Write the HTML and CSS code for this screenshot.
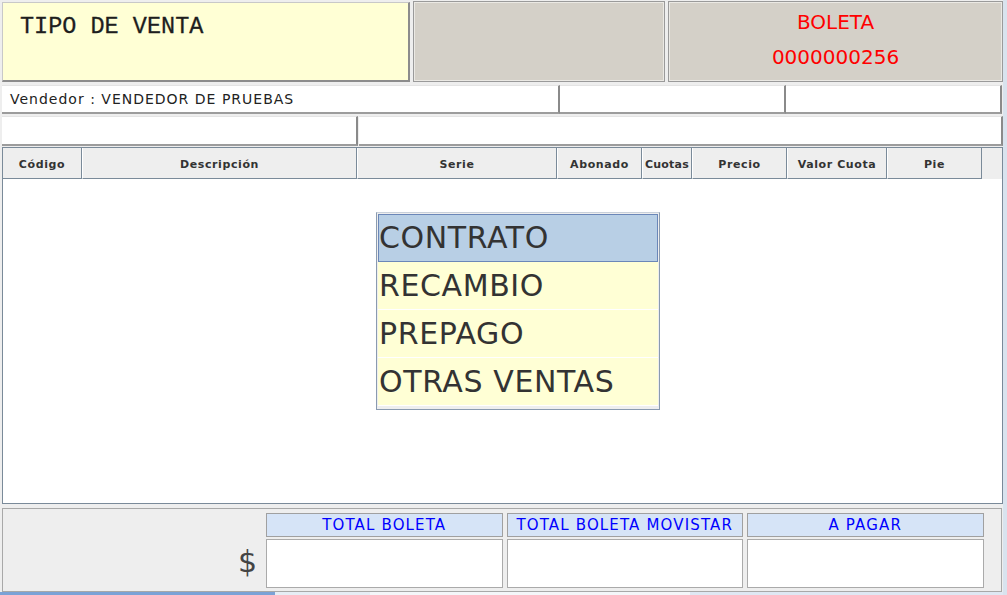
FILE: index.html
```html
<!DOCTYPE html>
<html lang="es">
<head>
<meta charset="utf-8">
<title>Tipo de venta</title>
<link rel="stylesheet" href="styles.css">
</head>
<body>
<div class="screen">
  <div class="top-row">
    <div class="title-box">TIPO DE VENTA</div>
    <div class="gray-box"></div>
    <div class="gray-box doc-box">
      <div class="doc-type">BOLETA</div>
      <div class="doc-num">0000000256</div>
    </div>
  </div>

  <div class="field-row row-a">
    <div class="field f-vend">Vendedor : VENDEDOR DE PRUEBAS</div>
    <div class="field f-mid"></div>
    <div class="field f-end"></div>
  </div>

  <div class="field-row row-b">
    <div class="field f-left"></div>
    <div class="field f-right"></div>
  </div>

  <div class="table">
    <div class="thead">
      <div class="th c-cod">Código</div>
      <div class="th c-desc">Descripción</div>
      <div class="th c-serie">Serie</div>
      <div class="th c-abon">Abonado</div>
      <div class="th c-cuot">Cuotas</div>
      <div class="th c-prec">Precio</div>
      <div class="th c-vcuo">Valor Cuota</div>
      <div class="th c-pie">Pie</div>
      <div class="th-fill"></div>
    </div>
    <div class="tbody"></div>

    <div class="popup">
      <div class="opt selected">CONTRATO</div>
      <div class="opt">RECAMBIO</div>
      <div class="opt">PREPAGO</div>
      <div class="opt">OTRAS VENTAS</div>
    </div>
  </div>

  <div class="totals">
    <div class="dollar">$</div>
    <div class="tot-col">
      <div class="tot-head">TOTAL BOLETA</div>
      <div class="tot-val"></div>
    </div>
    <div class="tot-col">
      <div class="tot-head">TOTAL BOLETA MOVISTAR</div>
      <div class="tot-val"></div>
    </div>
    <div class="tot-col">
      <div class="tot-head">A PAGAR</div>
      <div class="tot-val"></div>
    </div>
  </div>

  <div class="taskbar">
    <div class="tb-a"></div>
    <div class="tb-b"></div>
    <div class="tb-c"></div>
    <div class="tb-d"></div>
  </div>
</div>
</body>
</html>
```

FILE: styles.css
```css
* { box-sizing: border-box; }

html, body {
  margin: 0;
  padding: 0;
  background: #eeeeee;
}

.screen {
  position: relative;
  width: 1007px;
  height: 595px;
  overflow: hidden;
  background: #eeeeee;
  border-right: 4px solid #d9e3ee;
  font-family: "DejaVu Sans", Verdana, sans-serif;
  display: flex;
  flex-direction: column;
}

/* ---------- top row ---------- */
.top-row {
  display: flex;
  height: 82px;
  padding: 1px 0 0 2px;
  gap: 3px;
}

.title-box {
  width: 408px;
  height: 80px;
  margin-top: 1px;
  background: #ffffd5;
  border-top: 1px solid #c8c8c8;
  border-left: 1px solid #c8c8c8;
  border-right: 2px solid #8c8c8c;
  border-bottom: 2px solid #8c8c8c;
  font-family: "Liberation Mono", "Courier New", monospace;
  font-size: 23.5px;
  color: #1e1e1e;
  padding: 10px 0 0 17px;
  line-height: 28px;
  -webkit-text-stroke: 0.3px #1e1e1e;
}

.gray-box {
  width: 252px;
  height: 81px;
  background: #d4d0c8;
  border: 1px solid #9a9a9a;
  box-shadow: inset 0 0 0 1px #ebe9e4;
}

.doc-box {
  width: 335px;
  display: flex;
  flex-direction: column;
  align-items: center;
  color: #ff0000;
  font-size: 20px;
}

.doc-type { margin-top: 7px; line-height: 26px; }
.doc-num { margin-top: 9px; line-height: 26px; }

/* ---------- field rows ---------- */
.field-row {
  display: flex;
  padding-left: 2px;
}

.row-a { margin-top: 3px; height: 29px; }
.row-b { margin-top: 2px; height: 30px; }

.field {
  background: #ffffff;
  border-top: 1px solid #e4e4e4;
  border-right: 2px solid #8a8a8a;
  border-bottom: 2px solid #9c9c9c;
  height: 100%;
}

.f-vend {
  width: 558px;
  font-size: 14px;
  letter-spacing: 1px;
  color: #222;
  padding: 5px 0 0 8px;
  line-height: 17px;
  white-space: nowrap;
}
.f-mid { width: 226px; }
.f-end { width: 216px; }

.f-left { width: 356px; }
.f-right { width: 644px; margin-left: 1px; }

/* ---------- table ---------- */
.table {
  position: relative;
  margin: 1px 0 0 2px;
  width: 1001px;
  height: 357px;
  border: 1px solid #7a8a99;
  background: #ffffff;
  display: flex;
  flex-direction: column;
}

.thead {
  display: flex;
  height: 31px;
  background: #eeeeee;
}

.th {
  height: 31px;
  border-right: 1px solid #7a8a99;
  border-bottom: 1px solid #7a8a99;
  border-left: 1px solid #ffffff;
  font-size: 11px;
  font-weight: bold;
  letter-spacing: 0.6px;
  color: #333;
  display: flex;
  align-items: center;
  justify-content: center;
  padding-top: 2px;
  white-space: nowrap;
}

.c-cod { width: 79px; border-left: none; }
.c-desc { width: 275px; }
.c-serie { width: 200px; }
.c-abon { width: 85px; }
.c-cuot { width: 50px; letter-spacing: 0.2px; }
.c-prec { width: 95px; }
.c-vcuo { width: 100px; }
.c-pie { width: 95px; }
.th-fill { flex: 1; background: #eeeeee; }

.tbody { flex: 1; background: #ffffff; }

/* popup list (overlay) */
.popup {
  position: absolute;
  left: 373px;
  top: 64px;
  width: 284px;
  height: 198px;
  background: #eeeeee;
  border: 1px solid #8a9bb0;
  border-top-color: #c8d0da;
  padding: 1px 1px 0 1px;
}

.opt {
  height: 48px;
  background: #ffffd5;
  border-bottom: 1px solid #ffffff;
  font-size: 30px;
  letter-spacing: 0.6px;
  color: #333333;
  padding-left: 1px;
  line-height: 48px;
  white-space: nowrap;
}

.opt.selected {
  background: #b8cfe5;
  border: 1px solid #6b87b8;
  padding-left: 0;
  line-height: 46px;
}

/* ---------- totals ---------- */
.totals {
  margin: 4px 0 0 2px;
  width: 1000px;
  height: 84px;
  border: 1px solid #a8a8a8;
  background: #eeeeee;
  display: flex;
  padding: 4px 0 0 0;
  gap: 4px;
}

.dollar {
  width: 259px;
  text-align: right;
  padding: 29px 5px 0 0;
  font-size: 30px;
  color: #444;
  line-height: 40px;
}

.tot-col {
  width: 236.5px;
  display: flex;
  flex-direction: column;
  gap: 2px;
}

.tot-head {
  height: 24px;
  background: #d6e4f7;
  border: 1px solid #a0a0a0;
  color: #0000ff;
  font-size: 15px;
  letter-spacing: 1.15px;
  text-align: center;
  line-height: 23px;
  white-space: nowrap;
}

.tot-val {
  height: 49px;
  background: #ffffff;
  border: 1px solid #aaaaaa;
}

/* ---------- bottom strip ---------- */
.taskbar {
  margin-top: 0;
  height: 4px;
  display: flex;
  flex: 1;
}
.tb-a { width: 275px; background: #7ba2d6; }
.tb-b { width: 95px; background: #e6edf5; }
.tb-c { width: 320px; background: #f4f6f9; }
.tb-d { flex: 1; background: #dfe8f3; }
```
